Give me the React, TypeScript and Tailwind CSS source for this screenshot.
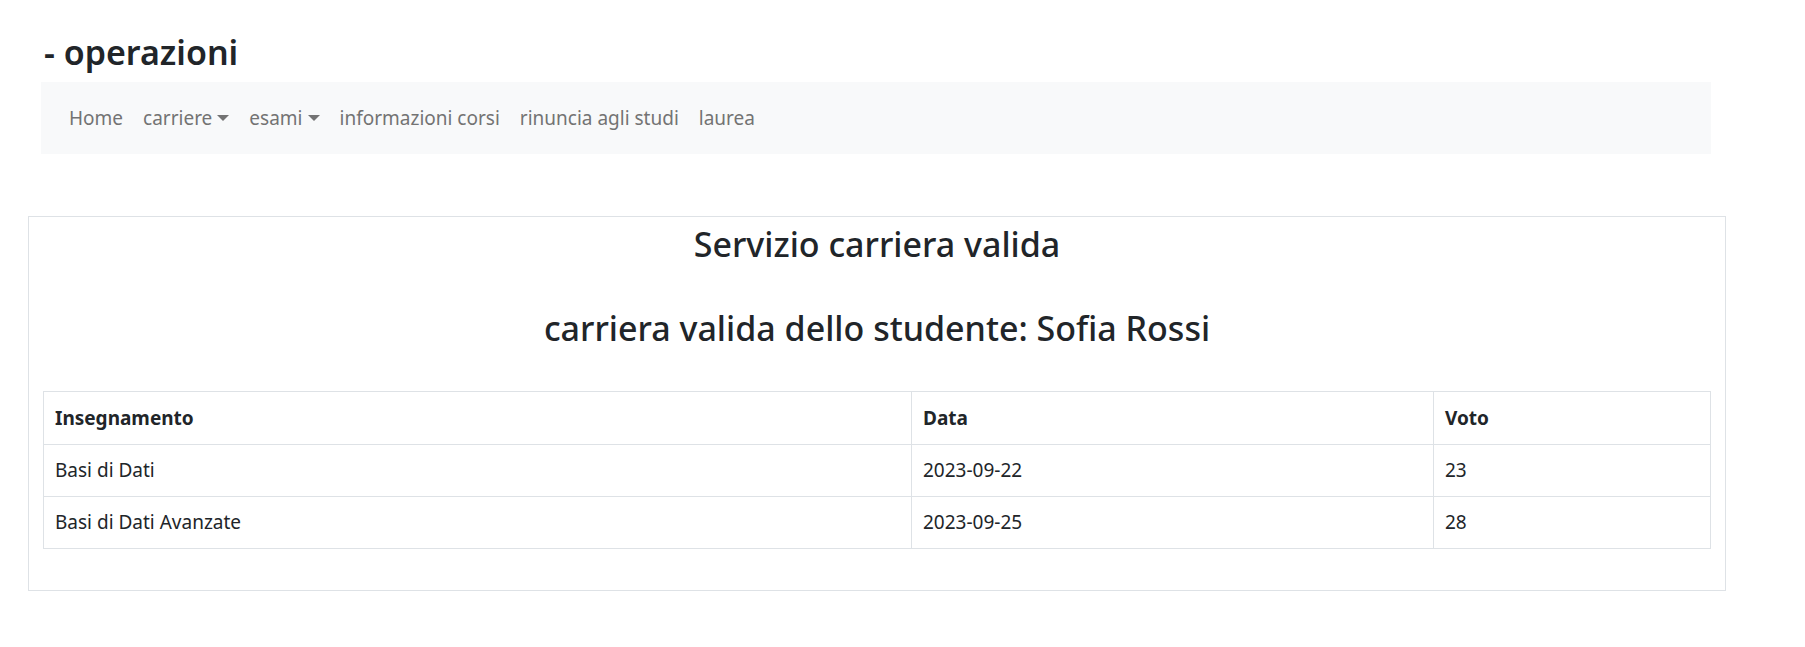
import React from "react";

const navLinks = [
  { label: "Home", dropdown: false },
  { label: "carriere", dropdown: true },
  { label: "esami", dropdown: true },
  { label: "informazioni corsi", dropdown: false },
  { label: "rinuncia agli studi", dropdown: false },
  { label: "laurea", dropdown: false },
];

const rows = [
  { insegnamento: "Basi di Dati", data: "2023-09-22", voto: "23" },
  { insegnamento: "Basi di Dati Avanzate", data: "2023-09-25", voto: "28" },
];

export default function App() {
  return (
    <div className="min-h-screen bg-white font-['Noto_Sans',sans-serif] text-[#212529]">
      {/* intestazione */}
      <h2 className="pl-[44px] pt-[28px] text-[34px] leading-[48px] font-semibold">- operazioni</h2>

      <nav className="ml-[41px] mt-[6px] flex h-[72px] w-[1670px] items-center bg-[#f8f9fa] px-[18px]">
        {navLinks.map((link) => (
          <a
            key={link.label}
            href="#"
            className="flex items-center px-[10px] text-[19px] leading-[30px] text-[#737373]"
          >
            {link.label}
            {link.dropdown && (
              <span className="ml-[5px] inline-block h-0 w-0 border-x-[6px] border-t-[6px] border-x-transparent border-t-[#737373]" />
            )}
          </a>
        ))}
      </nav>

      {/* servizio carriera */}
      <div className="ml-[28px] mt-[62px] w-[1698px] border border-[#dee2e6] px-[14px] pt-[6px] pb-[41px]">
        <h3 className="text-center text-[34px] leading-[42px] font-medium">Servizio carriera valida</h3>
        <h3 className="mt-[42px] text-center text-[34px] leading-[42px] font-medium">
          carriera valida dello studente: Sofia Rossi
        </h3>

        <table className="mt-[42px] w-full border-collapse border border-[#dee2e6] text-[19px]">
          <colgroup>
            <col className="w-[868px]" />
            <col className="w-[522px]" />
            <col className="w-[277px]" />
          </colgroup>
          <thead>
            <tr className="h-[53px]">
              <th className="border border-[#dee2e6] px-[11px] text-left font-bold">Insegnamento</th>
              <th className="border border-[#dee2e6] px-[11px] text-left font-bold">Data</th>
              <th className="border border-[#dee2e6] px-[11px] text-left font-bold">Voto</th>
            </tr>
          </thead>
          <tbody>
            {rows.map((r) => (
              <tr key={r.insegnamento} className="h-[52px]">
                <td className="border border-[#dee2e6] px-[11px]">{r.insegnamento}</td>
                <td className="border border-[#dee2e6] px-[11px]">{r.data}</td>
                <td className="border border-[#dee2e6] px-[11px]">{r.voto}</td>
              </tr>
            ))}
          </tbody>
        </table>
      </div>
    </div>
  );
}
